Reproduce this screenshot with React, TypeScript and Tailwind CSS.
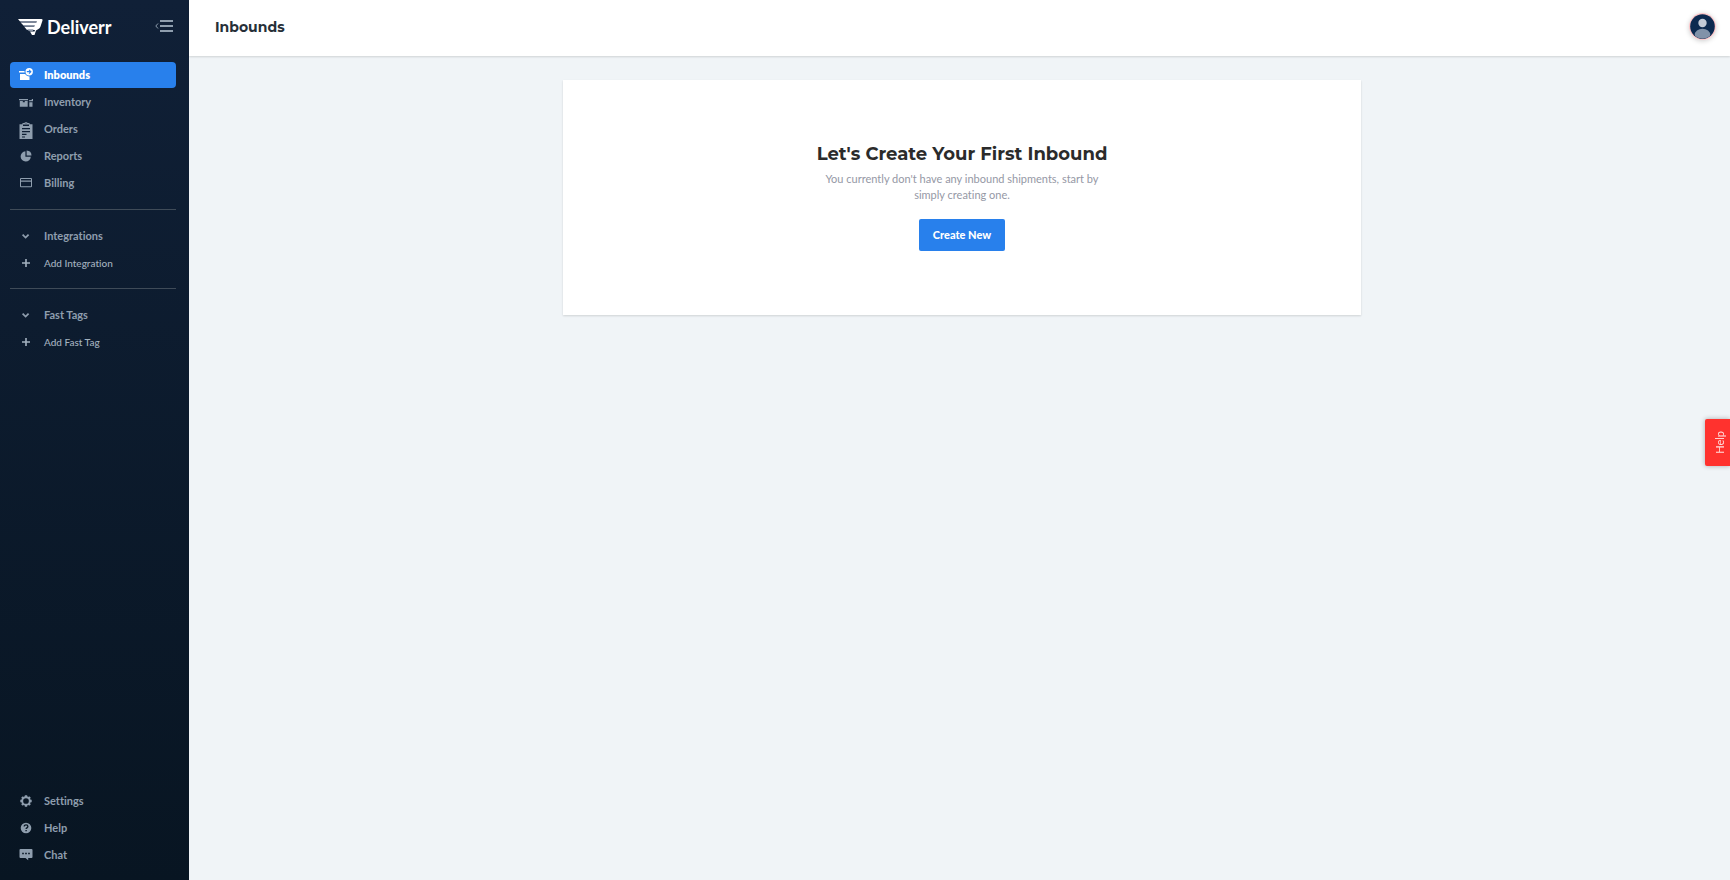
import type { ReactNode } from "react";

type IconProps = { children: ReactNode };

function Icon({ children }: IconProps) {
  return (
    <svg width="18" height="20" viewBox="0 -1 18 20" fill="currentColor" className="shrink-0" aria-hidden="true">
      {children}
    </svg>
  );
}

const InboundsIcon = () => (
  <Icon>
    <path d="M2 5h7v1.500H2zM3 8h9.500v6H3z" />
    <circle cx="12.200" cy="5.700" r="4.700" fill="#2880ec" />
    <path fillRule="evenodd" d="M12.200 2a3.700 3.700 0 1 1 0 7.400 3.700 3.700 0 0 1 0-7.400zm.2 1.500-.7.7.9.9H9.800v1.200h2.800l-.9.9.7.7 2.200-2.200z" />
  </Icon>
);

const InventoryIcon = () => (
  <Icon>
    <path d="M2 6h9v1.300H2zM2.800 8h3v1.300h2V8h2.900v5.700H2.800zM12 7.300l2.600-.4.400-.9h1v2.300h-4zM12.300 9.200h3.200v4.500h-3.200z" />
  </Icon>
);

const OrdersIcon = () => (
  <Icon>
    <path
      transform="translate(0 1)"
      fillRule="evenodd"
      d="M2.500 3.200h3V2.100h1.900a1.700 1.700 0 0 1 3.200 0h1.900v1.100h3V18h-13zM6 3.600V5h6V3.600zM5 7v1.300h8V7zm0 3v1.200h8V10zm0 2.800V14h4.500v-1.200zm0 2.600v1.100h3v-1.100zM9 1.600a.5.500 0 1 0 0 1 .5.500 0 0 0 0-1z"
    />
  </Icon>
);

const ReportsIcon = () => (
  <Icon>
    <path d="M8.400 4.300v5.400h5.400a5.100 5.100 0 1 1-5.400-5.400z" />
    <path d="M9.600 3.600a5.100 5.100 0 0 1 4.900 4.900H9.600z" />
  </Icon>
);

const BillingIcon = () => (
  <Icon>
    <path fillRule="evenodd" d="M4 4h10a1 1 0 0 1 1 1v7.300a1 1 0 0 1-1 1H4a1 1 0 0 1-1-1V5a1 1 0 0 1 1-1zm0 1.100v1.300h10V5.100zm0 2.600v4.500h10V7.700z" />
  </Icon>
);

const ChevronIcon = () => (
  <Icon>
    <path d="M5.600 7.600l3 3 3-3" fill="none" stroke="currentColor" strokeWidth="1.700" />
  </Icon>
);

const PlusIcon = () => (
  <Icon>
    <path d="M8.200 5h1.600v3.200H13v1.600H9.800V13H8.200V9.800H5V8.200h3.200z" />
  </Icon>
);

const SettingsIcon = () => (
  <Icon>
    <circle cx="9" cy="9" r="3.800" fill="none" stroke="currentColor" strokeWidth="1.900" />
    <path
      d="M9 3.300v2M9 12.700v2M3.300 9h2M12.700 9h2M5 5l1.300 1.300M11.700 11.700 13 13M13 5l-1.300 1.300M6.300 11.700 5 13"
      stroke="currentColor"
      strokeWidth="2.400"
    />
  </Icon>
);

const HelpIcon = () => (
  <Icon>
    <circle cx="9" cy="9" r="5.300" />
    <path d="M7.200 7.600c0-2.300 3.700-2.200 3.700 0 0 1.300-1.800 1.300-1.800 2.500" fill="none" stroke="#081623" strokeWidth="1.300" />
    <path d="M8.400 10.900h1.400v1.300H8.400z" fill="#081623" />
  </Icon>
);

const ChatIcon = () => (
  <Icon>
    <path
      fillRule="evenodd"
      d="M3.500 3h11a1 1 0 0 1 1 1v7a1 1 0 0 1-1 1h-3.300v2.200L8.500 12h-5a1 1 0 0 1-1-1V4a1 1 0 0 1 1-1zM5.200 6.700v1.500h1.600V6.700zm3 0v1.500h1.600V6.700zm3 0v1.500h1.600V6.700z"
    />
  </Icon>
);

type ItemProps = { icon: ReactNode; label: string; active?: boolean };

function NavItem({ icon, label, active }: ItemProps) {
  return (
    <li>
      <a
        href="#"
        aria-current={active ? "page" : undefined}
        className={
          active
            ? "flex h-[26px] items-center gap-[9px] rounded bg-[#2880ec] pl-[7px] text-[11px] font-extrabold text-white"
            : "flex h-[26px] items-center gap-[9px] rounded pl-[7px] text-[11px] font-bold text-[#8f9eae]"
        }
      >
        {icon}
        {label}
      </a>
    </li>
  );
}

function NavGroup({ title, action }: { title: string; action: string }) {
  return (
    <section className="flex flex-col gap-px border-t border-[#3f4b58] pt-[13px] pb-3">
      <button type="button" className="flex h-[26px] items-center gap-[9px] pl-[7px] text-[11px] font-bold text-[#8f9eae]">
        <ChevronIcon />
        {title}
      </button>
      <a href="#" className="flex h-[26px] items-center gap-[9px] pl-[7px] text-[10px] font-medium text-[#a3b1bf]">
        <PlusIcon />
        {action}
      </a>
    </section>
  );
}

function Logo() {
  return (
    <a href="#" className="flex items-center gap-1 text-white">
      <svg width="25" height="17" viewBox="0 0 25 17" aria-hidden="true">
        <path d="M0 0h23.500q1.500 0 1 1.500l-2 6q-.5 1.500-2 2.500l-2.500 1.500-1.500 4.500h-2.500l-2-3.500h4.500l.5-1.500H9L6.500 8h9.500l.7-1.500H5.500L2.800 3.800h15.400l.5-1.500H1.800z" fill="#fff" />
        <path d="M2 2.300h16.500l-.5 1.500H3zM5.300 6h11.300L16 7.800H6.500zM9 10.300h6.500l-.8 2H11z" fill="#8d97a8" />
      </svg>
      <span className="text-lg leading-5 font-bold">Deliverr</span>
    </a>
  );
}

function Sidebar() {
  return (
    <aside className="flex w-[189px] shrink-0 flex-col bg-linear-to-b from-[#102037] to-[#081522] px-[10px]">
      <div className="flex h-[62px] items-start justify-between pt-[17px] pr-1.5 pl-2">
        <Logo />
        <button type="button" aria-label="Collapse sidebar" className="mt-0.5 text-[#8f9eae]">
          <svg width="18" height="14" viewBox="0 0 18 14" fill="none" stroke="currentColor" aria-hidden="true">
            <path d="M3 4.500.800 7 3 9.500" />
            <path d="M5 2h13M5 7h13M5 12h13" strokeWidth="2" />
          </svg>
        </button>
      </div>
      <nav aria-label="Main" className="mr-[3px]">
        <ul className="flex flex-col gap-px pb-[13px]">
          <NavItem icon={<InboundsIcon />} label="Inbounds" active />
          <NavItem icon={<InventoryIcon />} label="Inventory" />
          <NavItem icon={<OrdersIcon />} label="Orders" />
          <NavItem icon={<ReportsIcon />} label="Reports" />
          <NavItem icon={<BillingIcon />} label="Billing" />
        </ul>
        <NavGroup title="Integrations" action="Add Integration" />
        <NavGroup title="Fast Tags" action="Add Fast Tag" />
      </nav>
      <ul className="mt-auto mr-[3px] flex flex-col gap-px pb-3">
        <NavItem icon={<SettingsIcon />} label="Settings" />
        <NavItem icon={<HelpIcon />} label="Help" />
        <NavItem icon={<ChatIcon />} label="Chat" />
      </ul>
    </aside>
  );
}

function Avatar() {
  return (
    <button type="button" aria-label="Account" className="rounded-full shadow-[0_1px_5px_rgba(0,0,0,0.2)]">
      <svg width="27" height="27" viewBox="0 0 27 27" aria-hidden="true">
        <clipPath id="avatar-disc">
          <circle cx="13.500" cy="13.500" r="12" />
        </clipPath>
        <circle cx="13.500" cy="13.500" r="13.500" fill="#fbc5c8" />
        <circle cx="13.500" cy="13.500" r="12.300" fill="#0c2a50" />
        <circle cx="13.500" cy="10" r="4.200" fill="#c2cad7" />
        <ellipse cx="13.500" cy="22" rx="7.800" ry="6.300" fill="#8192a9" clipPath="url(#avatar-disc)" />
      </svg>
    </button>
  );
}

export default function App() {
  return (
    <div className="flex min-h-screen bg-[#f0f4f7] font-['Lato',sans-serif] [font-variant-ligatures:none]">
      <Sidebar />
      <div className="flex min-w-0 flex-1 flex-col">
        <header className="flex h-14 items-center justify-between bg-white pr-[14px] pb-1 pl-[26px] shadow-[0_1px_2px_rgba(0,0,0,0.14)]">
          <h1 className="pt-0.5 font-['Montserrat','Inter',sans-serif] text-sm font-bold text-[#262f38]">Inbounds</h1>
          <Avatar />
        </header>
        <main className="py-6 pr-6 pl-[29px]">
          <section className="mx-auto flex max-w-[798px] flex-col items-center bg-white pt-[62px] pb-16 text-center shadow-[0_1px_2px_rgba(0,0,0,0.14)]">
            <h2 className="font-['Montserrat','Inter',sans-serif] text-lg leading-6 font-bold text-[#2b2b2b]">
              Let's Create Your First Inbound
            </h2>
            <p className="mt-[5px] max-w-[290px] text-[11px] leading-4 text-[#9598a5]">
              You currently don't have any inbound shipments, start by simply creating one.
            </p>
            <button type="button" className="mt-4 h-8 rounded-xs bg-[#2880ec] px-[14px] text-[11px] font-black text-white">
              Create New
            </button>
          </section>
        </main>
      </div>
      <button
        type="button"
        className="fixed top-[419px] right-0 flex h-[47px] w-[25px] items-center justify-center rounded-l-xs bg-[#ff322e] pl-[6px] text-[11px] text-[#ffdcda] shadow-[0_0_5px_rgba(0,0,0,0.3)]"
      >
        <span className="rotate-180 [writing-mode:vertical-rl]">Help</span>
      </button>
    </div>
  );
}
